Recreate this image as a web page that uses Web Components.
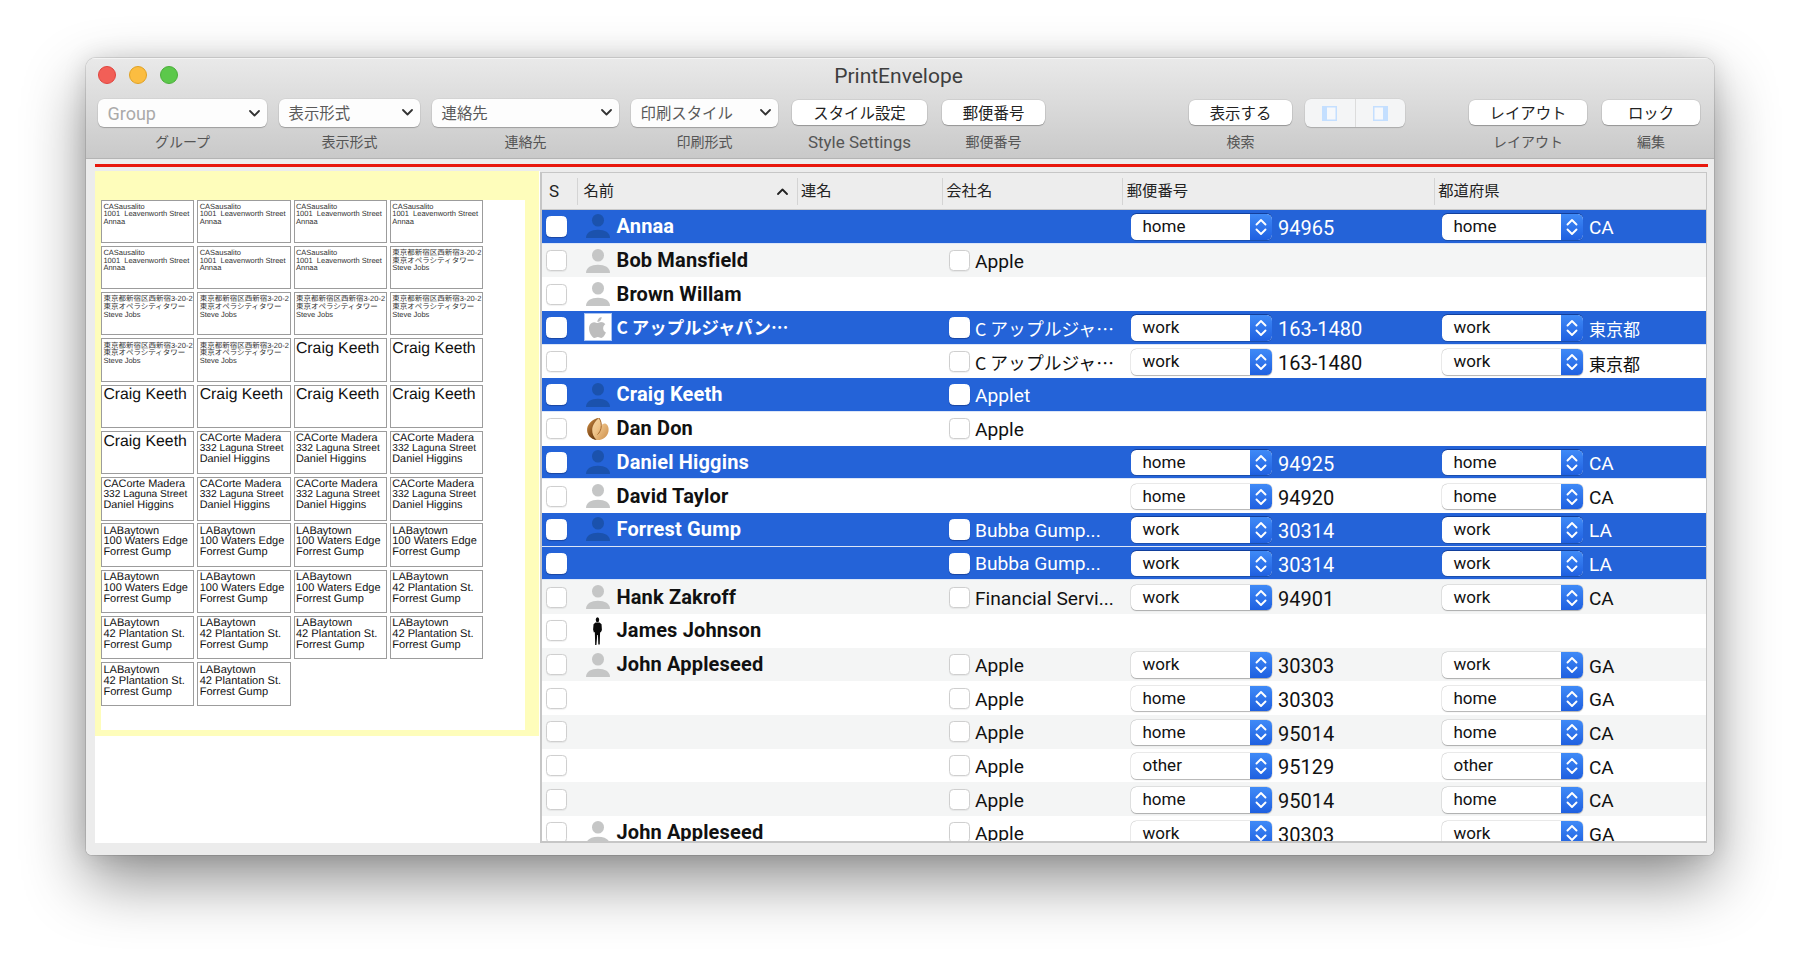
<!DOCTYPE html>
<html lang="ja"><head><meta charset="utf-8"><title>PrintEnvelope</title>
<style>
html,body{margin:0;padding:0;background:#fff;width:1800px;height:968px;overflow:hidden;font-family:Roboto,"Noto Sans CJK JP",sans-serif}
body{display:block;padding:58px 0 0 86px;box-sizing:border-box}
</style></head><body>
<app-window></app-window>
<script>
const UI='Roboto,"Noto Sans CJK JP",sans-serif';
const CHEV_DOWN='<svg width="11" height="7" viewBox="0 0 11 7"><path d="M1 1l4.5 4.5L10 1" fill="none" stroke="#333" stroke-width="1.8" stroke-linecap="round" stroke-linejoin="round"/></svg>';
const isCJK=t=>/[^\x00-\x7f]/.test(t);
class Base extends HTMLElement{
  constructor(){super();this.attachShadow({mode:'open'});}
  connectedCallback(){this.shadowRoot.innerHTML=this.render();}
}
class TrafficLights extends Base{render(){return `<style>:host{display:flex;gap:13px;padding-left:12px;align-items:center;margin-top:-3px}
i{display:block;width:18px;height:18px;border-radius:50%;box-sizing:border-box}
.r{background:#f25f57;border:1px solid #e0443e}.y{background:#fbbd41;border:1px solid #dfa123}.g{background:#5cc84b;border:1px solid #4aae3a}</style>
<i class="r"></i><i class="y"></i><i class="g"></i>`}}
class ToolItem extends Base{render(){return `<style>:host{display:flex;flex-direction:column;align-items:stretch;flex:none}
.c{height:28px;display:flex;flex-direction:column}
.l{height:20px;margin-top:4.5px;line-height:20px;text-align:center;color:#555;font-size:14px;white-space:nowrap}
:host([latin]) .l{font-size:17px}</style>
<div class="c"><slot></slot></div><div class="l">${this.getAttribute('label')}</div>`}}
class PopUp extends Base{render(){return `<style>:host{display:flex;align-items:center;justify-content:space-between;height:28px;box-sizing:border-box;padding:0 7px 2px 9.5px;background:#fdfdfd;border-radius:6px;box-shadow:0 1px 1px rgba(0,0,0,.22),0 0 0 .5px rgba(0,0,0,.08);color:#5a5a5a;font-size:15.4px}
:host([disabled]){color:#aaa;font-size:18px;padding-bottom:0}svg{display:block}</style>
<span><slot></slot></span>${CHEV_DOWN}`}}
class PushButton extends Base{render(){return `<style>:host{display:flex;align-items:center;justify-content:center;height:25px;margin-top:1px;box-sizing:border-box;padding-bottom:2px;background:#fff;border-radius:6px;box-shadow:0 1px 1px rgba(0,0,0,.25),0 0 0 .5px rgba(0,0,0,.12);color:#222;font-size:15.4px;white-space:nowrap}</style><slot></slot>`}}
class SegControl extends Base{render(){const ico=(x)=>`<svg width="15" height="15" viewBox="0 0 15 15"><rect width="15" height="15" fill="#c4dfff"/><rect x="${x}" y="1.5" width="8.5" height="12" fill="#f6f8fb"/></svg>`;
return `<style>:host{display:flex;height:28px;background:#f4f5f6;border-radius:6px;box-shadow:0 1px 1px rgba(0,0,0,.16),0 0 0 .5px rgba(0,0,0,.07)}
div{flex:1;display:flex;align-items:center;justify-content:center}div+div{border-left:1px solid #dcdcdc}</style>
<div>${ico(5)}</div><div>${ico(1.5)}</div>`}}
class EnvCard extends Base{render(){const lines=this.getAttribute('lines').split('|').map(t=>`<div>${t}</div>`).join('');
return `<style>:host{display:block;box-sizing:border-box;border:1.4px solid #9c9c9c;padding:1px 0 0 1.4px;overflow:hidden;white-space:pre;color:#111;text-rendering:geometricPrecision;font-family:"Liberation Sans","Noto Sans CJK JP",sans-serif;background:#fff}
:host([size=s]){font-size:7.5px;line-height:7.7px;padding-top:2.2px;color:#333}
:host([size=m]){font-size:11px;line-height:10.8px;padding-top:1.2px}
:host([size=d]){font-size:10.9px;line-height:10.4px;padding-top:1.2px}
:host([size=d]) div:nth-of-type(2){font-size:10.2px}
:host([size=g]){font-size:11.1px;line-height:11px;padding-top:1.2px}
:host([size=l]){font-size:15.8px;line-height:18px;padding-top:.6px}</style>${lines}`}}
class EnvelopeSheet extends Base{render(){
const A='CASausalito|1001  Leavenworth Street|Annaa',J='東京都新宿区西新宿3-20-2|東京オペラシティタワー|Steve Jobs',C='Craig Keeth',D='CACorte Madera|332 Laguna Street|Daniel Higgins',F='LABaytown|100 Waters Edge|Forrest Gump',G='LABaytown|42 Plantation St.|Forrest Gump';
const groups=[[A,'s'],[J,'s'],[C,'l'],[D,'d'],[F,'m'],[G,'g']];let h='';
for(const [l,s] of groups)for(let i=0;i<7;i++)h+=`<env-card size="${s}" lines="${l}"></env-card>`;
return `<style>:host{display:block;flex:none;width:445px;background:#fff;box-sizing:border-box}
.y{background:#fefdbb;height:565px;padding:28.5px 14px 6px 6px;box-sizing:border-box;width:444px}
.p{background:#fff;height:530.5px;display:grid;grid-template-columns:repeat(4,93.4px);grid-auto-rows:43.4px;gap:2.9px;align-content:start}</style>
<div class="y"><div class="p">${h}</div></div>`}}
class RowCheck extends Base{render(){return `<style>:host{display:block;flex:none;width:20.5px;height:21px;box-sizing:border-box;background:#fff;border-radius:4.5px;border:1px solid #cfcfcf;box-shadow:0 .5px 1px rgba(0,0,0,.06)}
:host([on]){border-color:#fff;box-shadow:0 1px 1px rgba(0,0,40,.3)}</style>`}}
class AvatarIcon extends Base{render(){const k=this.getAttribute('kind');let svg='';
if(k=='person'||k=='sel'){const f=k=='sel'?'#1b52ad':'#c5c6c6';svg=`<svg width="24" height="24" viewBox="0 0 24 24" fill="${f}"><ellipse cx="12" cy="6.3" rx="6" ry="6.3"/><path d="M0 24c0-5.5 5.2-8.3 12-8.3S24 18.5 24 24z"/></svg>`}
else if(k=='apple')svg=`<div class="sq"><svg width="25" height="25" viewBox="0 0 24 24" fill="#bdbdbd"><path d="M18.71 19.5c-.83 1.24-1.71 2.45-3.05 2.47-1.34.03-1.77-.79-3.29-.79-1.53 0-2 .77-3.27.82-1.31.05-2.3-1.32-3.14-2.53C4.25 17 2.94 12.45 4.7 9.39c.87-1.52 2.43-2.48 4.12-2.51 1.28-.02 2.5.87 3.29.87.78 0 2.26-1.07 3.81-.91.65.03 2.47.26 3.64 1.98-.09.06-2.17 1.28-2.15 3.81.03 3.02 2.65 4.03 2.68 4.04-.03.07-.42 1.44-1.38 2.83M13 3.5c.73-.83 1.94-1.46 2.94-1.5.13 1.17-.34 2.35-1.04 3.19-.69.85-1.83 1.51-2.95 1.42-.15-1.15.41-2.35 1.05-3.11z"/></svg></div>`;
else if(k=='cookie')svg=`<svg width="24" height="24" viewBox="0 0 24 24"><defs><linearGradient id="c" x1="0" y1="0" x2="1" y2=".7"><stop offset="0" stop-color="#f8e0b4"/><stop offset=".55" stop-color="#efc48a"/><stop offset="1" stop-color="#d49a58"/></linearGradient><linearGradient id="d" x1="0" y1="0" x2=".8" y2="1"><stop offset="0" stop-color="#d79a52"/><stop offset=".55" stop-color="#8d5520"/><stop offset="1" stop-color="#5f3712"/></linearGradient></defs>
<path d="M13 1c-5 .5-10.8 4.5-11.8 10.5-.8 5.5 3.5 11 9.3 11.5 5.5.6 11-3 12-8.8.6-3.7-.9-7-3.2-7.7-1.7-.5-3.3.7-4.3 2.5C15.5 6 15 2 13 1z" fill="url(#c)"/>
<path d="M13 1C8 1.5 2.200 5.5 1.200 11.5c-.8 5.5 3.5 11 9.3 11.5-2.8-3-4.5-6.5-4.3-10.5C6.400 8.5 9 4 13 1z" fill="url(#d)"/>
<path d="M13 1c2 2.5 2.8 6.5 2 10.300-.5 2.500-1.800 4.700-3.500 6.200" stroke="#a86a2e" stroke-width="1" fill="none"/></svg>`;
else if(k=='man')svg=`<svg width="9" height="28" viewBox="0 0 10 28" preserveAspectRatio="none" fill="#0a0a0a"><ellipse cx="5" cy="2.8" rx="1.9" ry="2.5"/><path d="M2.8 5.400L7.200 5.400 9.500 7.200 9.900 13 8.600 15.500 7.900 15 7.700 20 7.500 27.500 5.900 27.500 5.500 18 4.700 18 3.800 28 2.400 28 2.200 20 2 15 1 15.500 .1 12.500 .6 7.200z"/></svg>`;
return `<style>:host{display:flex;align-items:center;justify-content:center;flex:none;width:24px;height:24px;position:relative}
svg{display:block;flex:none}.sq{width:28px;height:28px;flex:none;box-sizing:border-box;background:#fff;border:1px solid #a9c4f2;display:flex;align-items:center;justify-content:center}</style>${svg}`}}
class LabelPopup extends Base{render(){return `<style>:host{display:flex;flex:none;width:141px;height:25.5px;box-sizing:border-box;border-radius:5.5px;background:#fff;box-shadow:0 .5px 1px rgba(0,0,0,.25),0 0 0 .5px rgba(0,0,0,.13);color:#111;font-size:17px;overflow:hidden;position:relative;top:.5px}
:host([on]){box-shadow:0 -1px 0 #123f9c,0 1px 0 #1a4fae}
span{flex:1;padding-left:11.5px;line-height:25.5px}
b{flex:none;width:22px;display:flex;align-items:center;justify-content:center;background:linear-gradient(#3f8af7,#1f60e0)}svg{display:block}</style>
<span><slot></slot></span><b><svg width="12" height="18" viewBox="0 0 12 18" fill="none" stroke="#fff" stroke-width="1.9" stroke-linecap="round" stroke-linejoin="round"><path d="M1.5 6.5L6 2l4.5 4.5M1.5 11.5L6 16l4.5-4.5"/></svg></b>`}}
class ContactRow extends Base{render(){const a=n=>this.getAttribute(n)||'';const on=this.hasAttribute('on');const O=on?'on':'';
const kind=a('avatar');const av=kind?`<avatar-icon kind="${kind=='person'&&on?'sel':kind}"></avatar-icon>`:'<i class="sp"></i>';
const co=a('co')?`<row-check ${O}></row-check><span class="co${isCJK(a('co'))?' j':''}">${a('co')}</span>`:'';
const pop=(l,v,c)=>l?`<label-popup ${O}>${l}</label-popup><span class="${c}${isCJK(v)?' j':''}">${v}</span>`:'';
return `<style>:host{display:grid;grid-template-columns:407px 182px 311px 1fr;height:33.68px;box-sizing:border-box;flex:none;background:#fff;color:#111;font-size:19px}
:host([alt]){background:#f4f5f5}
:host([on]){background:#2463d8;color:#fff;border-bottom:1.8px solid #dce6f7}
.c{display:flex;align-items:center;min-width:0;white-space:nowrap}
.c1{padding-left:4px}avatar-icon{margin-left:19px}.sp{display:block;width:24px;margin-left:19px;flex:none}
.n{margin-left:7px;font-weight:700;font-size:20px;letter-spacing:.15px;position:relative;top:-.5px}
.n.j{font-size:17.4px;letter-spacing:0;font-family:"Noto Sans CJK JP",sans-serif}
.co{margin-left:5.5px;position:relative;top:.8px;font-size:19.2px}
.co.j{font-size:17.8px;font-family:"Noto Sans CJK JP",sans-serif}
.z{margin-left:6px;position:relative;top:1.8px;font-size:20px}.s{margin-left:6px;position:relative;top:1.5px}
.s.j{font-size:17px}</style>
<div class="c c1"><row-check ${O}></row-check>${av}<span class="n${isCJK(a('name'))?' j':''}">${a('name')}</span></div>
<div class="c">${co}</div>
<div class="c">${pop(a('l'),a('zip'),'z')}</div>
<div class="c">${pop(a('l'),a('st'),'s')}</div>`}}
class TableHeader extends Base{render(){return `<style>:host{display:grid;grid-template-columns:34.5px 220px 145.3px 180.5px 311.5px 1fr;height:36px;flex:none;background:#ededed;border-bottom:1px solid #c9c9c9;color:#222;font-size:15.3px;align-items:center}
div{height:27px;line-height:27px;padding-left:3.5px;border-left:1.5px solid #d4d4d4;white-space:nowrap;position:relative}
div:first-of-type{border:0;padding-left:7px;font-size:17px}div:nth-of-type(2){padding-left:6px}
svg{position:absolute;right:9px;top:10px}</style>
<div>S</div><div>名前<svg width="11" height="7" viewBox="0 0 11 7"><path d="M1 6l4.5-4.5L10 6" fill="none" stroke="#222" stroke-width="1.8" stroke-linecap="round" stroke-linejoin="round"/></svg></div><div>連名</div><div>会社名</div><div>郵便番号</div><div>都道府県</div>`}}
class ContactTable extends Base{render(){
const R=[
{on:1,name:'Annaa',avatar:'person',l:'home',zip:'94965',st:'CA'},
{name:'Bob Mansfield',avatar:'person',co:'Apple'},
{name:'Brown Willam',avatar:'person'},
{on:1,name:'C アップルジャパン…',avatar:'apple',co:'C アップルジャ…',l:'work',zip:'163-1480',st:'東京都'},
{co:'C アップルジャ…',l:'work',zip:'163-1480',st:'東京都'},
{on:1,name:'Craig Keeth',avatar:'person',co:'Applet'},
{name:'Dan Don',avatar:'cookie',co:'Apple'},
{on:1,name:'Daniel Higgins',avatar:'person',l:'home',zip:'94925',st:'CA'},
{name:'David Taylor',avatar:'person',l:'home',zip:'94920',st:'CA'},
{on:1,name:'Forrest Gump',avatar:'person',co:'Bubba Gump...',l:'work',zip:'30314',st:'LA'},
{on:1,co:'Bubba Gump...',l:'work',zip:'30314',st:'LA'},
{name:'Hank Zakroff',avatar:'person',co:'Financial Servi...',l:'work',zip:'94901',st:'CA'},
{name:'James Johnson',avatar:'man'},
{name:'John Appleseed',avatar:'person',co:'Apple',l:'work',zip:'30303',st:'GA'},
{co:'Apple',l:'home',zip:'30303',st:'GA'},
{co:'Apple',l:'home',zip:'95014',st:'CA'},
{co:'Apple',l:'other',zip:'95129',st:'CA'},
{co:'Apple',l:'home',zip:'95014',st:'CA'},
{name:'John Appleseed',avatar:'person',co:'Apple',l:'work',zip:'30303',st:'GA'}];
const rows=R.map((r,i)=>{let s=(r.on?' on':'')+(i%2?' alt':'');for(const k of ['name','avatar','co','l','zip','st'])if(r[k])s+=` ${k}="${r[k]}"`;return `<contact-row${s}></contact-row>`}).join('');
return `<style>:host{display:flex;flex-direction:column;flex:none;width:1167px;height:671px;box-sizing:border-box;margin-top:1px;border:solid #c6c6c6;border-width:1.5px 1px 2px 2px;overflow:hidden;background:#fff}</style><table-header></table-header>${rows}`}}
class AppWindow extends Base{render(){return `<style>:host{display:block;width:1628px;height:797px;border-radius:10px 10px 6px 6px;box-shadow:0 26px 62px rgba(0,0,0,.44),0 0 24px rgba(0,0,0,.12),0 0 0 1px rgba(0,0,0,.1);font-family:${UI}}
.w{height:100%;border-radius:inherit;overflow:hidden;background:#ececec;display:flex;flex-direction:column}
.tb{height:101px;flex:none;box-sizing:border-box;background:linear-gradient(#e9e9e9,#c9c9c9);border-bottom:1px solid #b4b4b4;border-top:1px solid #f4f4f4}
.tt{height:35px;display:grid;grid-template-columns:1fr auto 1fr;align-items:center}
.tt .t{font-size:21px;color:#3e3e3e;line-height:35px;transform:translateX(-1.5px)}
.row{display:flex;margin-top:5px;padding-left:12px}
.red{height:3px;margin:5px 6px 0 9px;background:#e8170c;flex:none}
.sp{display:flex;margin:4px 0 0 9px;height:672px;flex:none}</style>
<div class="w"><div class="tb">
<div class="tt"><traffic-lights></traffic-lights><div class="t">PrintEnvelope</div><i></i></div>
<div class="row">
<tool-item label="グループ" style="width:169px"><pop-up disabled>Group</pop-up></tool-item>
<tool-item label="表示形式" style="width:141px;margin-left:12px"><pop-up>表示形式</pop-up></tool-item>
<tool-item label="連絡先" style="width:187px;margin-left:12px"><pop-up>連絡先</pop-up></tool-item>
<tool-item label="印刷形式" style="width:147px;margin-left:12px"><pop-up>印刷スタイル</pop-up></tool-item>
<tool-item label="Style Settings" latin style="width:135px;margin-left:14px"><push-button>スタイル設定</push-button></tool-item>
<tool-item label="郵便番号" style="width:103px;margin-left:15px"><push-button>郵便番号</push-button></tool-item>
<tool-item label="検索" style="width:103px;margin-left:144px"><push-button>表示する</push-button></tool-item>
<tool-item label="" style="width:100px;margin-left:13px"><seg-control></seg-control></tool-item>
<tool-item label="レイアウト" style="width:118px;margin-left:64px"><push-button>レイアウト</push-button></tool-item>
<tool-item label="編集" style="width:98px;margin-left:15px"><push-button>ロック</push-button></tool-item>
</div></div>
<div class="red"></div>
<div class="sp"><envelope-sheet></envelope-sheet><contact-table></contact-table></div>
</div>`}}
const defs={'traffic-lights':TrafficLights,'tool-item':ToolItem,'pop-up':PopUp,'push-button':PushButton,'seg-control':SegControl,'env-card':EnvCard,'envelope-sheet':EnvelopeSheet,'row-check':RowCheck,'avatar-icon':AvatarIcon,'label-popup':LabelPopup,'contact-row':ContactRow,'table-header':TableHeader,'contact-table':ContactTable,'app-window':AppWindow};
for(const k in defs)customElements.define(k,defs[k]);
</script>
</body></html>
